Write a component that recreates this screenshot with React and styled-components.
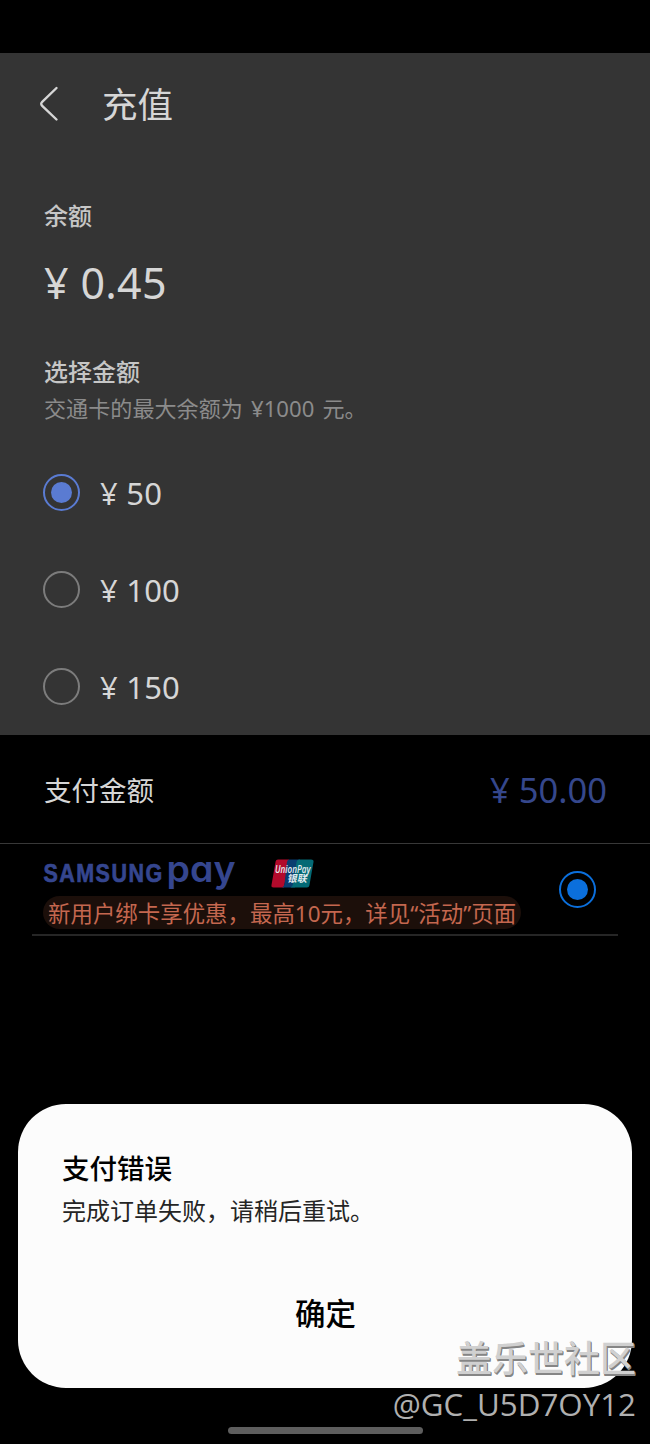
import React, { useState } from "react";
import styled, { createGlobalStyle } from "styled-components";

const cjk = `"Noto Sans CJK SC", sans-serif`;
const latin = `"Noto Sans", "Noto Sans CJK SC", sans-serif`;

const amounts = [50, 100, 150];

function App() {
  const [amount, setAmount] = useState(50);

  return (
    <Screen>
      <GlobalStyle />
      <StatusBar />
      <TopUp>
        <Header>
          <BackIcon viewBox="0 0 22 36">
            <path d="M18.5 2 L4.2 15.8 Q2.2 17.8 4.2 19.8 L18.5 33.5" />
          </BackIcon>
          <Title>充值</Title>
        </Header>
        <Label>余额</Label>
        <Balance>¥ 0.45</Balance>
        <Label>选择金额</Label>
        <Hint>交通卡的最大余额为 ¥1000 元。</Hint>
        <Options>
          {amounts.map((value) => (
            <Option key={value} onClick={() => setAmount(value)}>
              <Radio $checked={amount === value} $color="#5a7bd2" />
              <OptionText>¥ {value}</OptionText>
            </Option>
          ))}
        </Options>
      </TopUp>
      <PayRow>
        <PayLabel>支付金额</PayLabel>
        <PayAmount>¥ {amount.toFixed(2)}</PayAmount>
      </PayRow>
      <Method>
        <MethodInfo>
          <Logos>
            <SamsungPay />
            <UnionPay />
          </Logos>
          <Promo>新用户绑卡享优惠，最高10元，详见“活动”页面</Promo>
        </MethodInfo>
        <Radio $checked $color="#0b6fdc" />
      </Method>

      <Overlay>
        <Dialog>
          <DialogTitle>支付错误</DialogTitle>
          <DialogText>完成订单失败，请稍后重试。</DialogText>
          <DialogButton>确定</DialogButton>
        </Dialog>
        <HomeBar />
      </Overlay>

      <Watermark>
        <Community>盖乐世社区</Community>
        <UserName>@GC_U5D7OY12</UserName>
      </Watermark>
    </Screen>
  );
}

function SamsungPay() {
  return (
    <SamsungLogo viewBox="0 0 194 34">
      <SamsungText
        x="0.5"
        y="22.5"
        transform="scale(0.86 1)"
        textLength="138"
        lengthAdjust="spacing"
      >
        SAMSUNG
      </SamsungText>
      <PayText
        x="123.5"
        y="22.6"
        textLength="69"
        lengthAdjust="spacingAndGlyphs"
      >
        pay
      </PayText>
    </SamsungLogo>
  );
}

function UnionPay() {
  return (
    <UnionLogo viewBox="0 0 43 29">
      <path
        d="M7 0.5 H18 L13 28.5 H2.5 Q0 28.5 0.5 26 L4.6 2.5 Q5 0.5 7 0.5Z"
        fill="#b30a2b"
      />
      <path d="M18 0.5 H29 L24 28.5 H11 Q13 28 13.5 25 L16 3 Q16.5 0.5 18 0.5Z" fill="#093d70" />
      <path
        d="M28 0.5 H40 Q43 0.5 42.5 3 L38.4 26.5 Q38 28.5 36 28.5 H19.5 Q21.5 28 22 25 L25.5 3 Q26 0.5 28 0.5Z"
        fill="#046a75"
      />
      <text
        x="4"
        y="14"
        fontSize="10"
        fontWeight="600"
        fontStyle="italic"
        fontFamily="Open Sans, sans-serif"
        textLength="35.5"
        lengthAdjust="spacingAndGlyphs"
      >
        UnionPay
      </text>
      <text
        x="21"
        y="23"
        fontSize="9.8"
        fontWeight="700"
        fontFamily="Noto Sans CJK SC, sans-serif"
        transform="skewX(-12)"
      >
        银联
      </text>
    </UnionLogo>
  );
}

export default App;

const GlobalStyle = createGlobalStyle`
  * {
    box-sizing: border-box;
  }

  body {
    margin: 0;
    background-color: #000;
  }
`;

const Screen = styled.div`
  position: relative;
  width: 650px;
  height: 1444px;
  overflow: hidden;
  background-color: #000;
  font-family: ${cjk};
  color: #d6d6d6;
`;

const StatusBar = styled.div`
  height: 53px;
`;

const TopUp = styled.section`
  height: 682px;
  padding: 0 43px;
  background-color: #343434;
`;

const Header = styled.header`
  display: flex;
  align-items: center;
  gap: 42px;
  height: 101px;
  margin: 0 0 44px -5px;
`;

const BackIcon = styled.svg`
  width: 22px;
  height: 36px;
  fill: none;
  stroke: #d6d6d6;
  stroke-width: 2.4;
  stroke-linecap: round;
`;

const Title = styled.h1`
  margin: 0;
  padding-bottom: 1px;
  font-size: 35.5px;
  font-weight: 400;
  line-height: 48px;
`;

const Label = styled.div`
  padding-left: 1px;
  font-size: 24px;
  font-weight: 500;
  line-height: 34px;
  color: #c6c6c6;
`;

const Balance = styled.div`
  margin: 20px 0 40px;
  padding-left: 1px;
  font-family: ${latin};
  font-size: 43px;
  letter-spacing: 0.3px;
  line-height: 62px;
`;

const Hint = styled.div`
  margin-top: 4px;
  padding-left: 1px;
  font-family: ${latin};
  font-size: 22.1px;
  line-height: 32px;
  word-spacing: 2.5px;
  color: #8b8b8b;
`;

const Options = styled.div`
  margin-top: 20px;
`;

const Option = styled.div`
  display: flex;
  align-items: center;
  gap: 20px;
  height: 97px;
`;

const Radio = styled.span`
  display: flex;
  flex: none;
  align-items: center;
  justify-content: center;
  width: 37px;
  height: 37px;
  border: 2px solid ${(props) => (props.$checked ? props.$color : "#7c7c7c")};
  border-radius: 50%;

  &::after {
    content: "";
    display: ${(props) => (props.$checked ? "block" : "none")};
    width: 21px;
    height: 21px;
    border-radius: 50%;
    background-color: ${(props) => props.$color};
  }
`;

const OptionText = styled.span`
  padding-top: 1px;
  font-family: ${latin};
  font-size: 31px;
  letter-spacing: 0.2px;
  line-height: 44px;
`;

const PayRow = styled.div`
  display: flex;
  align-items: center;
  justify-content: space-between;
  height: 109px;
  padding: 0 43px 0 44px;
  border-bottom: 1px solid #383838;
`;

const PayLabel = styled.span`
  font-size: 27.5px;
`;

const PayAmount = styled.span`
  font-family: ${latin};
  font-size: 34.5px;
  color: #35478c;
`;

const Method = styled.div`
  display: flex;
  align-items: center;
  justify-content: space-between;
  height: 92px;
  margin: 0 32px;
  padding: 0 22px 0 11px;
  border-bottom: 2px solid #262626;
`;

const MethodInfo = styled.div`
  display: flex;
  flex-direction: column;
  align-items: flex-start;
  gap: 3px;
  padding-top: 10px;
`;

const Logos = styled.div`
  display: flex;
  gap: 34px;
  height: 34px;
`;

const SamsungLogo = styled.svg`
  width: 194px;
  height: 34px;
  overflow: visible;
  fill: #35468f;
`;

const SamsungText = styled.text`
  font-family: "Liberation Sans", sans-serif;
  font-size: 25px;
  font-weight: 700;
  stroke: #35468f;
  stroke-width: 0.7px;
`;

const PayText = styled.text`
  font-family: Inter, sans-serif;
  font-size: 36px;
  font-weight: 600;
  font-feature-settings: "cv11";
`;

const UnionLogo = styled.svg`
  width: 43px;
  height: 29px;
  fill: #e6eef2;
`;

const Promo = styled.div`
  height: 33px;
  padding: 1px 5px 0;
  border-radius: 17px;
  background-color: #1c0f0a;
  font-family: ${latin};
  font-size: 22.45px;
  line-height: 34px;
  white-space: nowrap;
  color: #c4674f;
`;

const Overlay = styled.div`
  position: absolute;
  inset: 0;
  display: flex;
  flex-direction: column;
  align-items: center;
  justify-content: flex-end;
  gap: 39px;
  padding-bottom: 10px;
`;

const Dialog = styled.div`
  display: flex;
  flex-direction: column;
  width: 614px;
  height: 284px;
  padding: 43px 44px 0;
  border-radius: 48px;
  background-color: #fcfcfc;
`;

const DialogTitle = styled.h2`
  margin: 0;
  font-size: 27.5px;
  font-weight: 500;
  line-height: 40px;
  color: #000;
`;

const DialogText = styled.p`
  margin: 5px 0 0;
  font-size: 24px;
  line-height: 36px;
  color: #252525;
`;

const DialogButton = styled.button`
  align-self: center;
  margin-top: 61px;
  padding: 0 0 0 1px;
  border: none;
  background: none;
  font-family: ${cjk};
  font-size: 30.5px;
  font-weight: 500;
  line-height: 46px;
  color: #000;
`;

const HomeBar = styled.div`
  width: 195px;
  height: 7px;
  border-radius: 4px;
  background-color: #5e5e5e;
`;

const Watermark = styled.div`
  position: absolute;
  right: 14px;
  bottom: 18px;
  display: flex;
  flex-direction: column;
  align-items: flex-end;
`;

const Community = styled.span`
  font-size: 36px;
  font-weight: 500;
  line-height: 52px;
  color: #d0d0d0;
  text-shadow: 1px 1px 0 #858585, 1px 2px 0 #858585;
`;

const UserName = styled.span`
  font-family: "Open Sans", sans-serif;
  font-size: 31.3px;
  font-weight: 400;
  line-height: 44px;
  color: #b0b0b0;
`;
